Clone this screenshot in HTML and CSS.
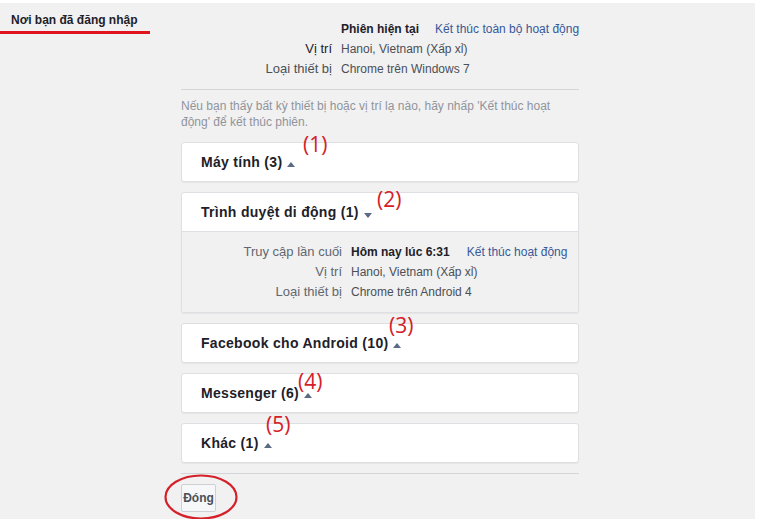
FILE: index.html
```html
<!DOCTYPE html>
<html lang="vi">
<head>
<meta charset="utf-8">
<title>Nơi bạn đã đăng nhập</title>
<link rel="stylesheet" href="styles.css">
</head>
<body>
<div class="page">
  <aside class="sidebar">
    <div class="tab">Nơi bạn đã đăng nhập</div>
  </aside>
  <main class="content">
    <div class="info">
      <div class="label"></div>
      <div class="value"><strong class="dark">Phiên hiện tại</strong><a class="link current-link">Kết thúc toàn bộ hoạt động</a></div>
      <div class="label dark">Vị trí</div>
      <div class="value">Hanoi, Vietnam (Xấp xỉ)</div>
      <div class="label">Loại thiết bị</div>
      <div class="value">Chrome trên Windows 7</div>
    </div>
    <p class="hint">Nếu bạn thấy bất kỳ thiết bị hoặc vị trí lạ nào, hãy nhấp 'Kết thúc hoạt động' để kết thúc phiên.</p>

    <section class="card">
      <div class="card-head">Máy tính (3)<span class="caret up"></span></div>
    </section>

    <section class="card">
      <div class="card-head">Trình duyệt di động (1)<span class="caret down"></span></div>
      <div class="card-body">
        <div class="label">Truy cập lần cuối</div>
        <div class="value"><strong class="dark">Hôm nay lúc 6:31</strong><a class="link end-link">Kết thúc hoạt động</a></div>
        <div class="label">Vị trí</div>
        <div class="value">Hanoi, Vietnam (Xấp xỉ)</div>
        <div class="label">Loại thiết bị</div>
        <div class="value">Chrome trên Android 4</div>
      </div>
    </section>

    <section class="card">
      <div class="card-head">Facebook cho Android (10)<span class="caret up"></span></div>
    </section>

    <section class="card">
      <div class="card-head">Messenger (6)<span class="caret up"></span></div>
    </section>

    <section class="card">
      <div class="card-head">Khác (1)<span class="caret up"></span></div>
    </section>

    <div class="footer">
      <button class="btn">Đóng</button>
    </div>
  </main>

  <span class="note n1">(1)</span>
  <span class="note n2">(2)</span>
  <span class="note n3">(3)</span>
  <span class="note n4">(4)</span>
  <span class="note n5">(5)</span>
  <svg class="ring" width="76" height="48" viewBox="0 0 76 48"><ellipse cx="38" cy="24" rx="35.5" ry="21.5" fill="none" stroke="#d42029" stroke-width="2.2"/></svg>
</div>
</body>
</html>
```
FILE: styles.css
```css
* { box-sizing: border-box; }
html, body { margin: 0; padding: 0; background: #fff; }
body {
  font-family: "Liberation Sans", Arial, sans-serif;
  font-size: 12px;
  color: #4b4f56;
}
.page {
  position: relative;
  margin-top: 3px;
  width: 755px;
  height: 516px;
  background: #f1f1f1;
  display: grid;
  grid-template-columns: 150px 398px;
  column-gap: 31px;
  align-items: start;
  overflow: hidden;
}
.sidebar { padding-top: 9px; }
.tab {
  padding: 0 0 3px 11px;
  line-height: 16px;
  font-weight: bold;
  color: #1d2129;
  border-bottom: 3px solid #e0141e;
}
.content { padding-top: 16px; }
.info {
  display: grid;
  grid-template-columns: 151px 1fr;
  column-gap: 9px;
  line-height: 20px;
  padding-bottom: 10px;
  border-bottom: 1px solid #d3d5d8;
}
.label { text-align: right; color: #4b4f56; white-space: nowrap; font-size: 13px; }
.value { color: #4b4f56; white-space: nowrap; }
.info .label.dark { color: #1d2129; }
.dark { color: #1d2129; }
.link { color: #365899; text-decoration: none; }
.current-link { margin-left: 16px; }
.end-link { margin-left: 17px; }
.hint {
  margin: 8px 0 12px;
  line-height: 16px;
  color: #90949c;
}
.card {
  background: #fff;
  border: 1px solid #dddfe2;
  border-radius: 3px;
  box-shadow: 0 1px 1px rgba(0,0,0,0.05);
  margin-bottom: 10px;
}
.card-head {
  height: 38px;
  padding-left: 19px;
  display: flex;
  align-items: center;
  font-size: 14px;
  font-weight: bold;
  color: #1d2129;
  letter-spacing: 0.3px;
  white-space: pre;
}
.caret {
  display: inline-block;
  width: 0; height: 0;
  border-left: 4.5px solid transparent;
  border-right: 4.5px solid transparent;
  margin-left: 5px;
  position: relative;
  top: 2px;
}
.caret.up { border-bottom: 5px solid #5a6b85; }
.caret.down { border-top: 5px solid #5a6b85; top: 3px; }
.card-body {
  border-top: 1px solid #dddfe2;
  background: #f1f1f1;
  padding: 10px 0 10px;
  display: grid;
  grid-template-columns: 160px 1fr;
  column-gap: 9px;
  line-height: 20px;
}
.card-body .label { color: #616770; }
.card-body .value { color: #4b4f56; }
.footer {
  border-top: 1px solid #d3d5d8;
  padding-top: 10px;
}
.btn {
  height: 28px;
  width: 35px;
  padding: 0;
  font-family: "Liberation Sans", Arial, sans-serif;
  font-size: 12px;
  font-weight: bold;
  color: #4b4f56;
  background: #f6f7f9;
  border: 1px solid #ced0d4;
  border-radius: 2px;
}
.note {
  position: absolute;
  font-family: "Open Sans", "Noto Sans", sans-serif;
  font-size: 21px;
  line-height: 22px;
  color: #d42029;
}
.n1 { left: 303px; top: 130px; }
.n2 { left: 377px; top: 185px; }
.n3 { left: 389px; top: 311px; }
.n4 { left: 298px; top: 367px; }
.n5 { left: 266px; top: 410px; }
.ring { position: absolute; left: 163px; top: 470px; }
```
